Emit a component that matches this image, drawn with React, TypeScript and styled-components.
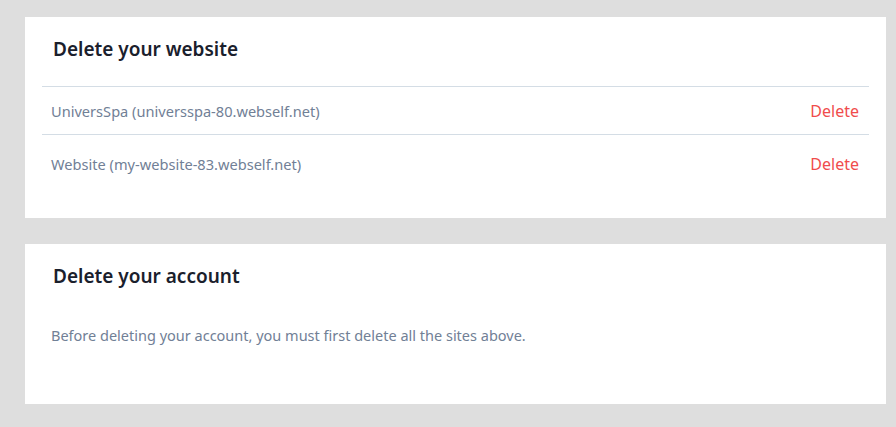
import React from 'react';
import styled, { createGlobalStyle } from 'styled-components';

const GlobalStyle = createGlobalStyle`
  html, body {
    margin: 0;
    padding: 0;
    background-color: #dedede;
  }
  body {
    font-family: 'Noto Sans', 'Open Sans', sans-serif;
  }
`;

const Page = styled.div`
  display: flex;
  flex-direction: column;
  gap: 26px;
  padding: 17px 10px 20px 25px;
`;

const Card = styled.section<{ $minHeight: number }>`
  background-color: #fff;
  padding: 19px 17px 0 17px;
  min-height: ${(p) => p.$minHeight}px;
  box-sizing: border-box;
`;

const Title = styled.h2`
  margin: 0;
  padding-left: 11px;
  font-size: 19px;
  font-weight: 600;
  color: #1a202c;
  line-height: 26px;
`;

const SiteList = styled.ul`
  list-style: none;
  margin: 24px 0 0 0;
  padding: 0;
  border-top: 1px solid #d4dde5;
`;

const SiteRow = styled.li<{ $last?: boolean }>`
  display: flex;
  justify-content: space-between;
  align-items: center;
  height: ${(p) => (p.$last ? 58 : 47)}px;
  padding: 0 10px 0 9px;
  border-bottom: ${(p) => (p.$last ? 'none' : '1px solid #d4dde5')};
`;

const SiteName = styled.span`
  font-size: 14.6px;
  color: #718096;
`;

const DeleteLink = styled.a`
  font-size: 16px;
  color: #f04c4c;
  text-decoration: none;
  cursor: pointer;
`;

const Note = styled.p`
  margin: 36px 0 0 0;
  padding-left: 9px;
  font-size: 14.5px;
  color: #718096;
`;

const sites = [
  { name: 'UniversSpa', domain: 'universspa-80.webself.net' },
  { name: 'Website', domain: 'my-website-83.webself.net' },
];

export default function App() {
  return (
    <>
      <GlobalStyle />
      <Page>
        <Card $minHeight={201}>
          <Title>Delete your website</Title>
          <SiteList>
            {sites.map((s, i) => (
              <SiteRow key={s.domain} $last={i === sites.length - 1}>
                <SiteName>
                  {s.name} ({s.domain})
                </SiteName>
                <DeleteLink>Delete</DeleteLink>
              </SiteRow>
            ))}
          </SiteList>
        </Card>
        <Card $minHeight={160}>
          <Title>Delete your account</Title>
          <Note>Before deleting your account, you must first delete all the sites above.</Note>
        </Card>
      </Page>
    </>
  );
}
